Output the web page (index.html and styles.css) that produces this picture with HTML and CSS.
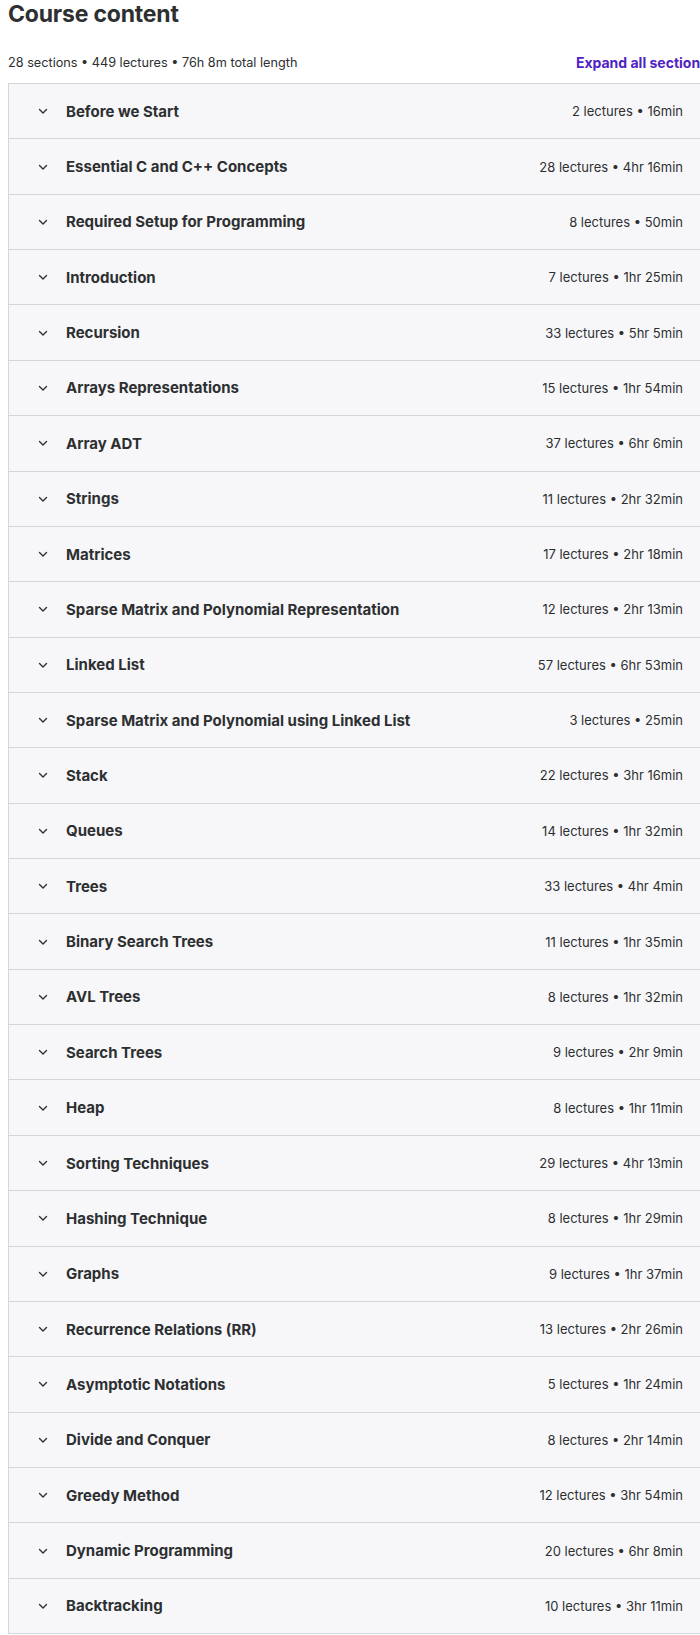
FILE: index.html
```html
<!DOCTYPE html>
<html lang="en">
<head>
<meta charset="utf-8">
<title>Course content</title>
<link rel="stylesheet" href="styles.css">
</head>
<body>
<div class="page">
  <h2 class="heading">Course content</h2>
  <div class="summary">
    <span class="stats">28 sections • 449 lectures • 76h 8m total length</span>
    <button class="expand">Expand all sections</button>
  </div>
  <div class="sections" id="sections"></div>
</div>
<script src="app.js"></script>
</body>
</html>
```
FILE: app.js
```js
const data = [
  ["Before we Start", "2 lectures • 16min"],
  ["Essential C and C++ Concepts", "28 lectures • 4hr 16min"],
  ["Required Setup for Programming", "8 lectures • 50min"],
  ["Introduction", "7 lectures • 1hr 25min"],
  ["Recursion", "33 lectures • 5hr 5min"],
  ["Arrays Representations", "15 lectures • 1hr 54min"],
  ["Array ADT", "37 lectures • 6hr 6min"],
  ["Strings", "11 lectures • 2hr 32min"],
  ["Matrices", "17 lectures • 2hr 18min"],
  ["Sparse Matrix and Polynomial Representation", "12 lectures • 2hr 13min"],
  ["Linked List", "57 lectures • 6hr 53min"],
  ["Sparse Matrix and Polynomial using Linked List", "3 lectures • 25min"],
  ["Stack", "22 lectures • 3hr 16min"],
  ["Queues", "14 lectures • 1hr 32min"],
  ["Trees", "33 lectures • 4hr 4min"],
  ["Binary Search Trees", "11 lectures • 1hr 35min"],
  ["AVL Trees", "8 lectures • 1hr 32min"],
  ["Search Trees", "9 lectures • 2hr 9min"],
  ["Heap", "8 lectures • 1hr 11min"],
  ["Sorting Techniques", "29 lectures • 4hr 13min"],
  ["Hashing Technique", "8 lectures • 1hr 29min"],
  ["Graphs", "9 lectures • 1hr 37min"],
  ["Recurrence Relations (RR)", "13 lectures • 2hr 26min"],
  ["Asymptotic Notations", "5 lectures • 1hr 24min"],
  ["Divide and Conquer", "8 lectures • 2hr 14min"],
  ["Greedy Method", "12 lectures • 3hr 54min"],
  ["Dynamic Programming", "20 lectures • 6hr 8min"],
  ["Backtracking", "10 lectures • 3hr 11min"]
];
const root = document.getElementById("sections");
const chevron = '<svg class="chev" viewBox="0 0 12 12" width="12" height="12"><path d="M2.5 4.5 L6 8 L9.5 4.5" fill="none" stroke="#2d2f31" stroke-width="1.4" stroke-linecap="round" stroke-linejoin="round"/></svg>';
for (const [title, meta] of data) {
  const row = document.createElement("div");
  row.className = "section";
  row.innerHTML = '<span class="icon">' + chevron + '</span><span class="title"></span><span class="meta"></span>';
  row.querySelector(".title").textContent = title;
  row.querySelector(".meta").textContent = meta;
  root.appendChild(row);
}
```
FILE: styles.css
```css
html, body {
  margin: 0;
  padding: 0;
  overflow: hidden;
  background: #ffffff;
}
body {
  font-family: "Inter", "Liberation Sans", sans-serif;
  color: #2d2f31;
}
.page {
  width: 700px;
  margin-left: 8px;
}
.heading {
  margin: 0;
  font-size: 23px;
  line-height: 29px;
  font-weight: 700;
  letter-spacing: -0.2px;
}
.summary {
  display: flex;
  justify-content: space-between;
  align-items: center;
  height: 54px;
  font-size: 12.7px;
}
.stats {
  padding-top: 13px;
}
.expand {
  border: 0;
  background: none;
  padding: 13px 0 0;
  font: inherit;
  font-weight: 700;
  font-size: 14px;
  color: #5022c3;
}
.sections {
  border: 1px solid #d1d7dc;
  border-bottom: 0;
}
.section {
  display: flex;
  align-items: center;
  height: 54.36px;
  padding: 0 24px 0 25px;
  background: #f7f7f9;
  border-bottom: 1px solid #d1d7dc;
}
.icon {
  width: 29px;
  display: flex;
  align-items: center;
  padding-left: 3px;
}
.chev {
  display: block;
}
.title {
  flex: 1;
  font-size: 15px;
  font-weight: 700;
}
.meta {
  font-size: 13px;
  font-weight: 400;
}
```
